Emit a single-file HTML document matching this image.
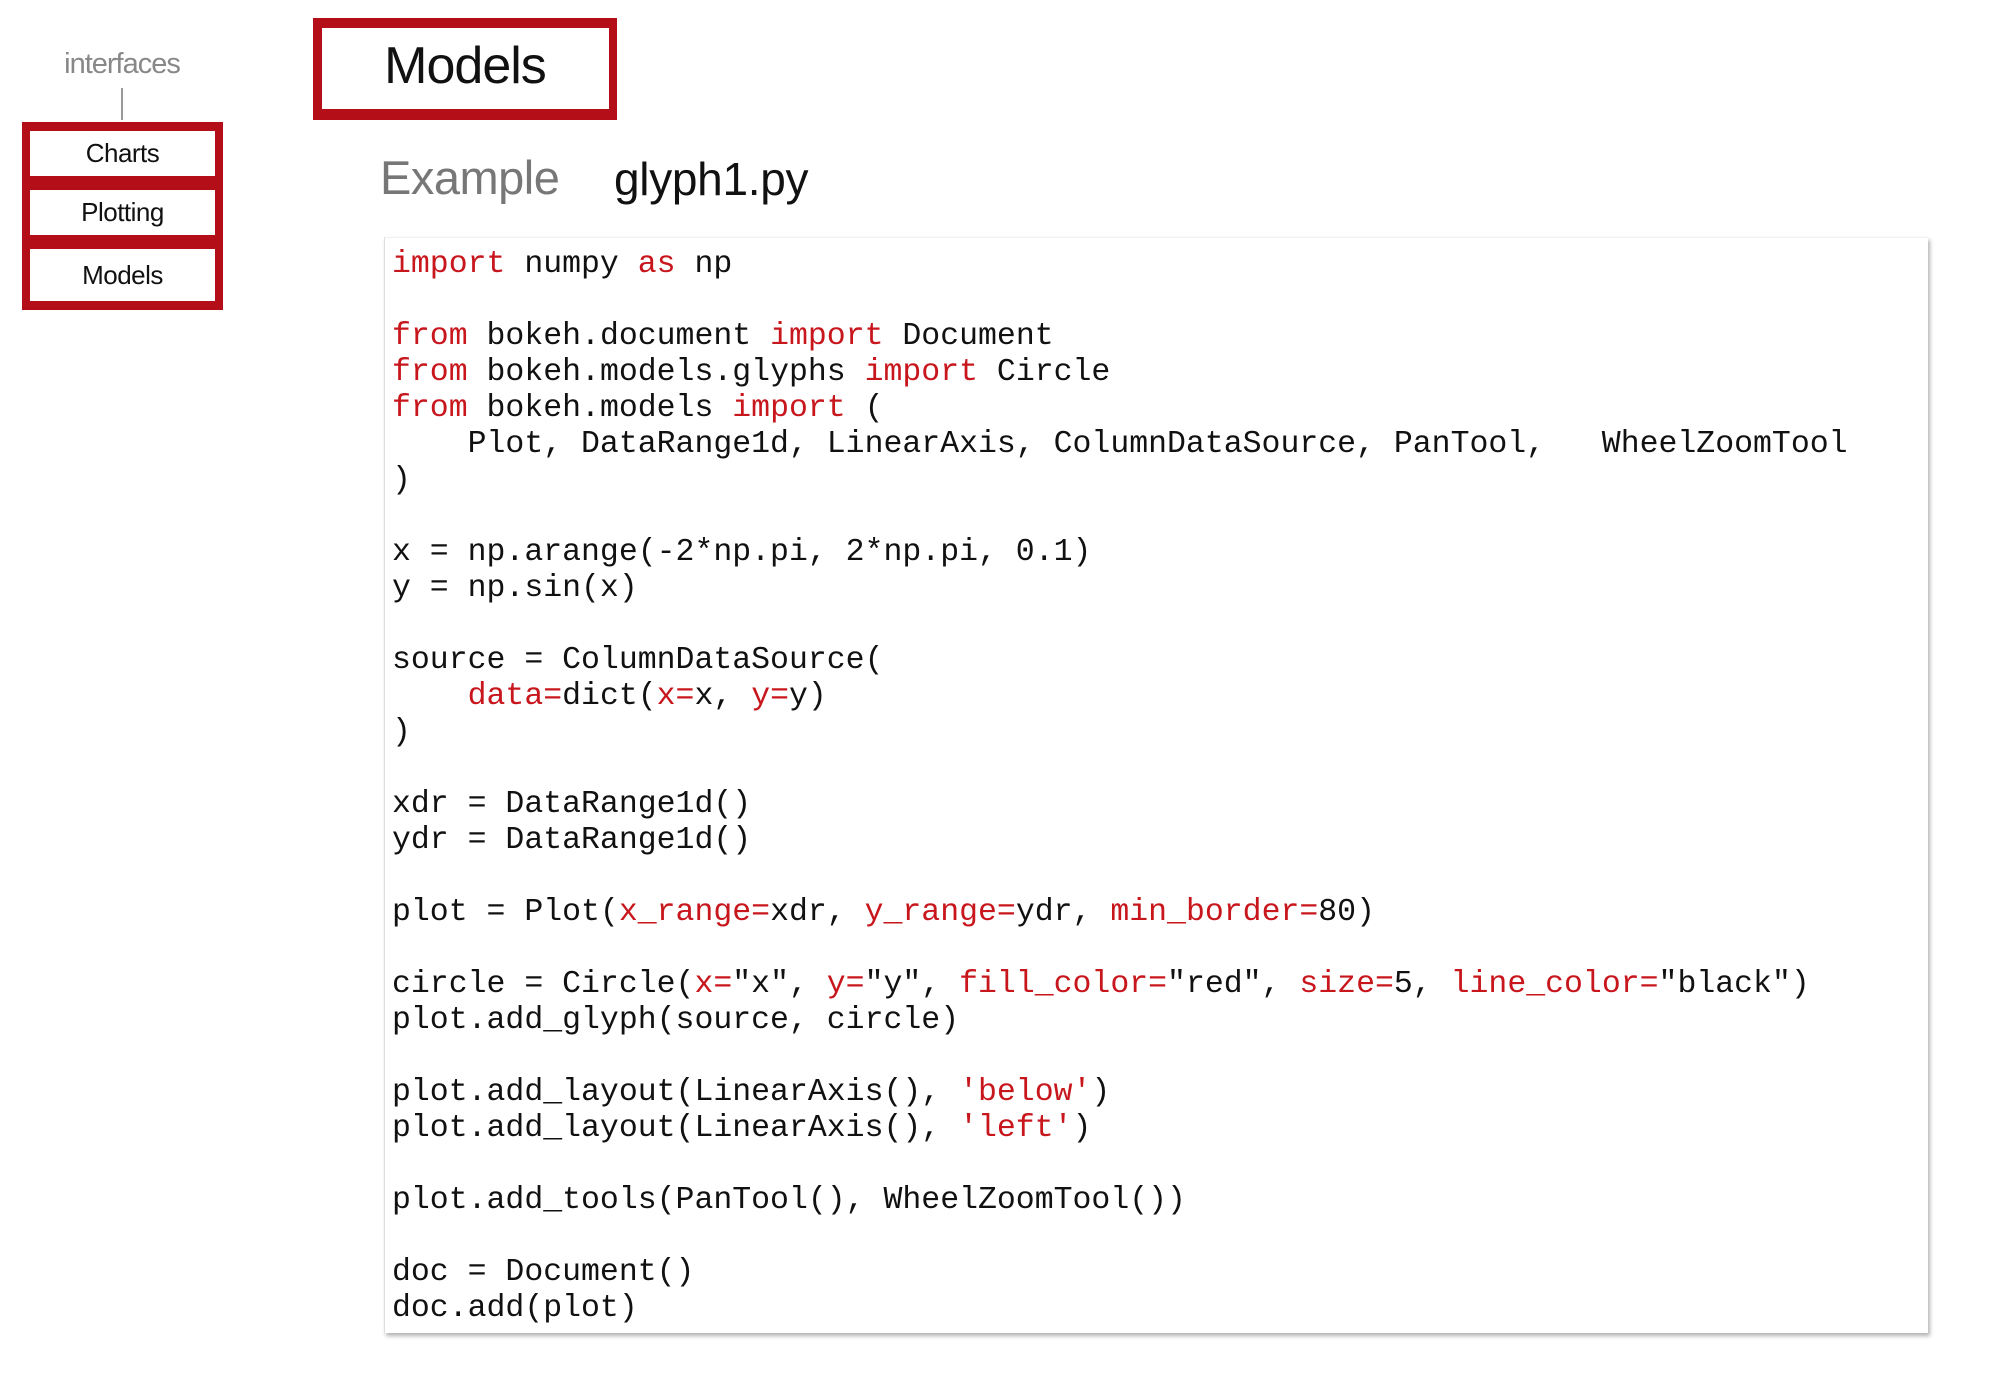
<!DOCTYPE html>
<html><head><meta charset="utf-8"><style>
html,body{margin:0;padding:0;background:#fff;width:2004px;height:1394px;overflow:hidden;position:relative;font-family:"Liberation Sans",sans-serif}
.abs{position:absolute}
.rb{position:absolute;box-sizing:border-box;border:solid #b40f19;border-width:10px 8px 11px 9px}
.btn{position:absolute;left:22px;width:201px;box-sizing:border-box;border:solid #b40f19;border-width:9px 8px 9px 8px;text-align:center;font-size:26px;color:#111;letter-spacing:-0.5px}
pre{margin:0;font-family:"Liberation Mono",monospace;font-size:31.5px;line-height:36px;color:#111}
.k{color:#c8161d}
</style></head><body>
<div class="abs" style="left:60px;top:48px;width:124px;text-align:center;font-size:29px;color:#888;font-weight:300;letter-spacing:-1px">interfaces</div>
<div class="abs" style="left:121px;top:88px;width:2px;height:32px;background:#999"></div>
<div class="btn" style="top:122px;height:63px;line-height:45px">Charts</div>
<div class="btn" style="top:181px;height:63px;line-height:45px">Plotting</div>
<div class="btn" style="top:240px;height:70px;line-height:52px">Models</div>

<div class="rb" style="left:313px;top:18px;width:304px;height:102px"></div>
<div class="abs" style="left:313px;top:34px;width:304px;text-align:center;font-size:52px;color:#111;line-height:64px;letter-spacing:-1px">Models</div>

<div class="abs" style="left:380px;top:150px;font-size:47px;color:#777;font-weight:300;letter-spacing:-0.5px">Example</div>
<div class="abs" style="left:614px;top:152px;font-size:46px;color:#111;letter-spacing:-0.3px">glyph1.py</div>

<div class="abs" style="left:384px;top:237px;width:1544px;height:1096px;background:#fff;border-left:1px solid #ddd;border-top:1px solid #f0f0f0;box-shadow:2px 3px 4px rgba(0,0,0,0.3);box-sizing:border-box;padding:9px 0 0 7px">
<pre><span class="k">import</span> numpy <span class="k">as</span> np

<span class="k">from</span> bokeh.document <span class="k">import</span> Document
<span class="k">from</span> bokeh.models.glyphs <span class="k">import</span> Circle
<span class="k">from</span> bokeh.models <span class="k">import</span> (
    Plot, DataRange1d, LinearAxis, ColumnDataSource, PanTool,   WheelZoomTool
)

x = np.arange(-2*np.pi, 2*np.pi, 0.1)
y = np.sin(x)

source = ColumnDataSource(
    <span class="k">data=</span>dict(<span class="k">x=</span>x, <span class="k">y=</span>y)
)

xdr = DataRange1d()
ydr = DataRange1d()

plot = Plot(<span class="k">x_range=</span>xdr, <span class="k">y_range=</span>ydr, <span class="k">min_border=</span>80)

circle = Circle(<span class="k">x=</span>"x", <span class="k">y=</span>"y", <span class="k">fill_color=</span>"red", <span class="k">size=</span>5, <span class="k">line_color=</span>"black")
plot.add_glyph(source, circle)

plot.add_layout(LinearAxis(), <span class="k">'below'</span>)
plot.add_layout(LinearAxis(), <span class="k">'left'</span>)

plot.add_tools(PanTool(), WheelZoomTool())

doc = Document()
doc.add(plot)</pre>
</div>
</body></html>
